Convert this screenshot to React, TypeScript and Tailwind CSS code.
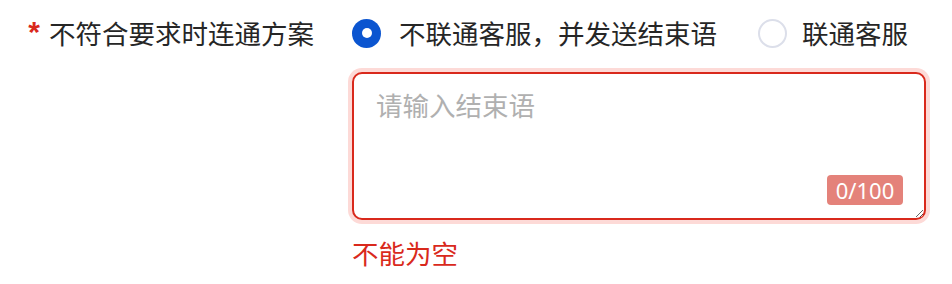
import React from "react";

const cjk = { fontFamily: '"Noto Sans CJK SC", "Noto Sans", sans-serif' };

export default function App() {
  return (
    <div className="w-[952px] h-[284px] bg-white" style={cjk}>
      <div className="flex pt-[4px]">
        <div className="w-[352px] h-[58px] flex items-center justify-end pr-[38px] shrink-0">
          <span
            className="text-[#d9291c] text-[30px] font-bold leading-none mr-[9px] -mt-[2px]"
            style={{ fontFamily: '"Liberation Sans", sans-serif' }}
          >
            *
          </span>
          <span className="text-[26.5px] leading-[40px] text-[#262626]">不符合要求时连通方案</span>
        </div>
        <div className="flex flex-col">
          <div className="h-[58px] flex items-center">
            <label className="flex items-center">
              <span className="w-[29px] h-[29px] rounded-full bg-[#0b55d0] flex items-center justify-center">
                <span className="w-[10px] h-[10px] rounded-full bg-white" />
              </span>
              <span className="ml-[18px] text-[26.5px] leading-[40px] text-[#262626]">不联通客服，并发送结束语</span>
            </label>
            <label className="flex items-center ml-[41px]">
              <span className="w-[29px] h-[29px] rounded-full border-2 border-[#dcdfea] bg-white" />
              <span className="ml-[15px] text-[26.5px] leading-[40px] text-[#262626]">联通客服</span>
            </label>
          </div>
          <div className="relative mt-[10px] w-[574px] h-[148px]">
            <textarea
              className="w-[574px] h-[148px] border-2 border-[#d9291c] rounded-[10px] shadow-[0_0_0_4px_#fddad7] outline-none px-[22px] pt-[11px] text-[26.5px] leading-[40px] text-[#262626] placeholder:text-[#b0b0b0] bg-white"
              style={cjk}
              placeholder="请输入结束语"
            />
            <span
              className="absolute right-[23px] bottom-[15px] w-[76px] h-[30px] rounded-[4px] bg-[#e4827a] text-white text-[22px] leading-[30px] flex items-center justify-center"
              style={{ fontFamily: '"Noto Sans", sans-serif' }}
            >
              0/100
            </span>
          </div>
          <div className="mt-[13px] text-[26.5px] leading-[40px] text-[#d9291c]">不能为空</div>
        </div>
      </div>
    </div>
  );
}
